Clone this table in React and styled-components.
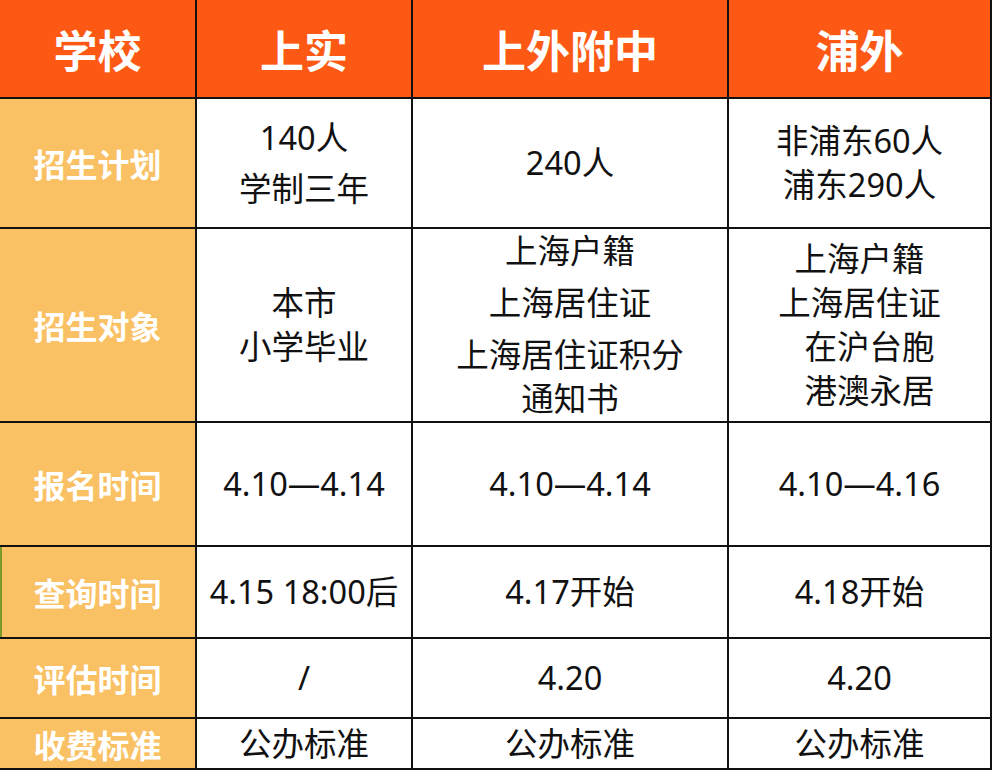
import styled, { createGlobalStyle } from "styled-components";

const GlobalStyle = createGlobalStyle`
  html, body {
    margin: 0;
    padding: 0;
    background: #ffffff;
  }
  body {
    font-family: "Noto Sans", "Noto Sans CJK SC", sans-serif;
  }
`;

const Table = styled.table`
  width: 992px;
  border-collapse: separate;
  border-spacing: 0;
  table-layout: fixed;
`;

const Row = styled.tr`
  height: ${(p) => p.$height}px;
`;

const HeadCell = styled.th`
  background: #fd5914;
  color: #ffffff;
  font-family: "Noto Sans CJK SC", sans-serif;
  font-weight: 700;
  font-size: 44px;
  text-align: center;
  vertical-align: middle;
  padding: 0;
  border-right: 2px solid #111;
  border-bottom: 2px solid #111;
`;

const LabelCell = styled.th`
  background: #f9c164;
  color: #ffffff;
  font-family: "Noto Sans CJK SC", sans-serif;
  font-weight: 700;
  font-size: 32px;
  text-align: center;
  vertical-align: middle;
  padding: 0;
  border-right: 2px solid #111;
  border-bottom: 2px solid #111;
  box-shadow: ${(p) => (p.$edge ? "inset 2px 0 0 #7a9a2a" : "none")};
`;

const Cell = styled.td`
  background: #ffffff;
  color: #111;
  font-size: 32.5px;
  text-align: center;
  vertical-align: middle;
  padding: 0;
  border-right: 2px solid #111;
  border-bottom: 2px solid #111;
`;

const Para = styled.div`
  line-height: 44px;
  white-space: pre-line;
  padding-left: ${(p) => p.$shift || 0}px;
  margin-top: ${(p) => (p.$first ? 0 : p.$gap || 0)}px;
`;

const heads = ["学校", "上实", "上外附中", "浦外"];
const widths = [197, 216, 316, 263];

const rows = [
  {
    label: "招生计划",
    height: 130,
    cells: [
      { lines: ["140人", "学制三年"], gap: 7 },
      { lines: ["240人"] },
      { lines: ["非浦东60人", "浦东290人"] },
    ],
  },
  {
    label: "招生对象",
    height: 194,
    cells: [
      { lines: ["本市", "小学毕业"] },
      { lines: ["上海户籍", "上海居住证", "上海居住证积分\n通知书"], gap: 8 },
      { lines: ["上海户籍", "上海居住证", "在沪台胞", "港澳永居"], shift: [0, 0, 20, 20] },
    ],
  },
  {
    label: "报名时间",
    height: 124,
    cells: [{ lines: ["4.10—4.14"] }, { lines: ["4.10—4.14"] }, { lines: ["4.10—4.16"] }],
  },
  {
    label: "查询时间",
    height: 92,
    edge: true,
    cells: [{ lines: ["4.15 18:00后"] }, { lines: ["4.17开始"] }, { lines: ["4.18开始"] }],
  },
  {
    label: "评估时间",
    height: 80,
    cells: [{ lines: ["/"] }, { lines: ["4.20"] }, { lines: ["4.20"] }],
  },
  {
    label: "收费标准",
    height: 51,
    cells: [{ lines: ["公办标准"] }, { lines: ["公办标准"] }, { lines: ["公办标准"] }],
  },
];

export default function App() {
  return (
    <>
      <GlobalStyle />
      <Table>
        <colgroup>
          {widths.map((w, i) => (
            <col key={i} style={{ width: w }} />
          ))}
        </colgroup>
        <thead>
          <Row $height={99}>
            {heads.map((h) => (
              <HeadCell key={h}>{h}</HeadCell>
            ))}
          </Row>
        </thead>
        <tbody>
          {rows.map((r) => (
            <Row key={r.label} $height={r.height}>
              <LabelCell $edge={r.edge}>{r.label}</LabelCell>
              {r.cells.map((c, i) => (
                <Cell key={i}>
                  {c.lines.map((l, j) => (
                    <Para
                      key={j}
                      $first={j === 0}
                      $gap={c.gap}
                      $shift={c.shift ? c.shift[j] : 0}
                    >
                      {l}
                    </Para>
                  ))}
                </Cell>
              ))}
            </Row>
          ))}
        </tbody>
      </Table>
    </>
  );
}
